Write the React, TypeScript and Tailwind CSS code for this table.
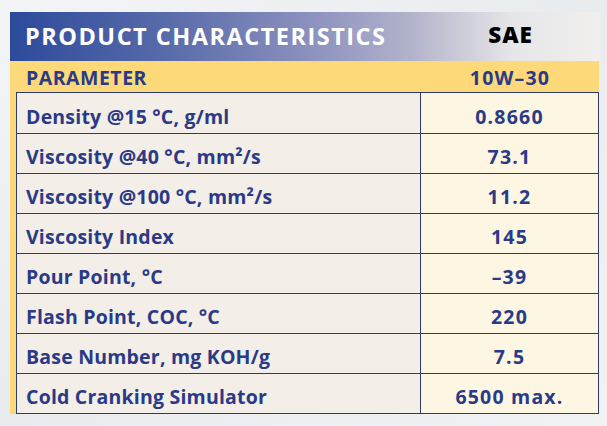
const rows: [string, string][] = [
  ["Density @15 °C, g/ml", "0.8660"],
  ["Viscosity @40 °C, mm²/s", "73.1"],
  ["Viscosity @100 °C, mm²/s", "11.2"],
  ["Viscosity Index", "145"],
  ["Pour Point, °C", "–39"],
  ["Flash Point, COC, °C", "220"],
  ["Base Number, mg KOH/g", "7.5"],
  ["Cold Cranking Simulator", "6500 max."],
];

export default function App() {
  return (
    <div
      className="h-[426px] w-[607px] overflow-hidden bg-gradient-to-br from-[#f3f4f6] via-[#e9ecef] to-[#f1f2f4] pt-[12px] pl-[10px]"
      style={{ fontFamily: "'Open Sans', Lato, sans-serif" }}
    >
      <div className="w-[590px]">
        <div className="flex h-[49px] items-center bg-[linear-gradient(to_right,#2c4a9b_0%,#5b6dab_28%,#8e93bf_52%,#b2b3cb_68%,#e6e5e8_85%,#f1f0ee_100%)]">
          <div className="w-[411px] pl-[15px] text-[23.5px] font-bold tracking-[1.5px] text-white">PRODUCT CHARACTERISTICS</div>
          <div className="flex-1 pb-[4px] text-center text-[22.5px] font-extrabold tracking-[1px] text-black">SAE</div>
        </div>
        <div className="flex h-[31px] w-[589px] items-center bg-[#fdd97a] pt-[3px] text-[19.5px] font-bold text-[#2a3a86]">
          <div className="w-[411px] pl-[16px] tracking-[0.5px]">PARAMETER</div>
          <div className="flex-1 text-center tracking-[1.2px]">10W–30</div>
        </div>
        <div className="flex w-[589px]">
          <div className="w-[6px] bg-[#fdd97a]" />
          <div className="flex-1 border border-[#2e3a6e] text-[19.5px] font-bold text-[#2a3a86]">
            {rows.map(([label, value], i) => (
              <div key={label} className={`flex ${i === 0 ? "h-[40px]" : "h-[40px] border-t border-[#2e3a6e]"}`}>
                <div className="flex w-[404px] items-center border-r border-[#2e3a6e] bg-[#f3eee8] pt-[7px] pl-[9px] tracking-[0.2px]">{label}</div>
                <div className="flex flex-1 items-center justify-center bg-[#fdf6e3] pt-[7px] tracking-[1.2px]">{value}</div>
              </div>
            ))}
          </div>
        </div>
      </div>
    </div>
  );
}
